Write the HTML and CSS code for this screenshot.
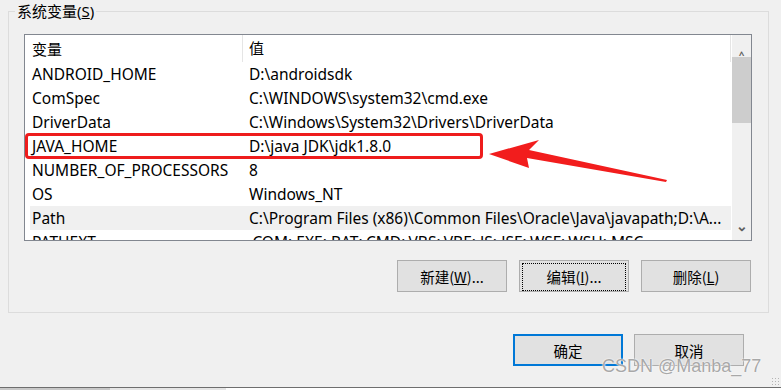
FILE: index.html
```html
<!DOCTYPE html>
<html lang="zh-CN">
<head>
    <meta charset="UTF-8">
    <title>系统变量</title>
    <link rel="stylesheet" href="styles.css">
</head>
<body>
    <div class="dialog">
        <fieldset class="group">
            <legend>系统变量(<u>S</u>)</legend>
            <div class="listbox">
                <div class="list">
                    <div class="head">
                        <div class="cell">变量</div>
                        <div class="cell sep">值</div>
                    </div>
                    <div class="row"><div class="cell">ANDROID_HOME</div><div class="cell">D:\androidsdk</div></div>
                    <div class="row"><div class="cell">ComSpec</div><div class="cell">C:\WINDOWS\system32\cmd.exe</div></div>
                    <div class="row"><div class="cell">DriverData</div><div class="cell">C:\Windows\System32\Drivers\DriverData</div></div>
                    <div class="row"><div class="cell">JAVA_HOME</div><div class="cell">D:\java JDK\jdk1.8.0</div></div>
                    <div class="row"><div class="cell">NUMBER_OF_PROCESSORS</div><div class="cell">8</div></div>
                    <div class="row"><div class="cell">OS</div><div class="cell">Windows_NT</div></div>
                    <div class="row hover"><div class="cell">Path</div><div class="cell">C:\Program Files (x86)\Common Files\Oracle\Java\javapath;D:\A...</div></div>
                    <div class="row"><div class="cell">PATHEXT</div><div class="cell">.COM;.EXE;.BAT;.CMD;.VBS;.VBE;.JS;.JSE;.WSF;.WSH;.MSC</div></div>
                </div>
                <div class="scrollbar">
                    <div class="arrow">&#x2038;</div>
                    <div class="thumb"></div>
                    <div class="track"></div>
                    <div class="arrow down">&#x2304;</div>
                </div>
                <div class="mark"></div>
            </div>
            <div class="actions">
                <button>新建(<u>W</u>)...</button>
                <button class="focused"><span>编辑(<u>I</u>)...</span></button>
                <button>删除(<u>L</u>)</button>
            </div>
        </fieldset>
        <div class="footer">
            <button class="default">确定</button>
            <button>取消</button>
        </div>
        <svg class="pointer" width="200" height="50" viewBox="0 0 200 50">
            <polygon points="6,18 56,4 46,14 184,44 183,46 44,22 46,32" fill="#f21d1d"/>
        </svg>
        <div class="watermark">CSDN @Manba_77</div>
        <div class="grip"></div>
    </div>
    <div class="under">
        <div class="under-bar"></div>
        <div class="under-gap"></div>
    </div>
</body>
</html>
```

FILE: styles.css
```css
body {
    margin: 0;
    background-color: #f0f0f0;
    font-family: "Noto Sans", "Noto Sans CJK SC", sans-serif;
    font-size: 15.5px;
    color: #000;
    width: 781px;
    height: 390px;
    overflow: hidden;
}

.dialog {
    position: relative;
    height: 387px;
    padding: 1px 12px 0 8px;
    box-sizing: border-box;
}

.group {
    margin: 0;
    padding: 13px 16px 20px 15px;
    border: 1px solid #dcdcdc;
    min-width: 0;
}

.group legend {
    margin-left: -9px;
    padding: 0 2px;
    line-height: 20px;
    height: 20px;
    font-size: 15px;
}

.listbox {
    position: relative;
    display: flex;
    height: 205px;
    border: 1px solid #828790;
    background-color: #fff;
    overflow: hidden;
}

.list {
    flex: 1;
    overflow: hidden;
}

.head,
.row {
    display: grid;
    white-space: nowrap;
}

.head {
    grid-template-columns: 217px 1fr;
    height: 27px;
    align-items: center;
    border-right: 1px solid #e5e5e5;
    font-size: 15px;
}

.head .cell {
    padding-left: 7px;
}

.head .sep {
    border-left: 1px solid #e5e5e5;
    padding-left: 6px;
    line-height: 27px;
}

.row {
    grid-template-columns: 212px 1fr;
    height: 24px;
    line-height: 24px;
    margin-left: 5px;
}

.row .cell {
    padding-left: 2px;
    overflow: hidden;
}

.row .cell + .cell {
    padding-left: 7px;
}

.row.hover {
    background-color: #f0f0f0;
}

.scrollbar {
    width: 19px;
    display: flex;
    flex-direction: column;
    background-color: #f0f0f0;
    border-left: 1px solid #fff;
}

.arrow {
    height: 22px;
    text-align: center;
    color: #606060;
    font-size: 14px;
    line-height: 26px;
    font-weight: bold;
}

.arrow.down {
    line-height: 16px;
}

.thumb {
    height: 66px;
    background-color: #cdcdcd;
}

.track {
    flex: 1;
}

.actions {
    display: flex;
    justify-content: flex-end;
    gap: 12px;
    margin-top: 19px;
    margin-right: 1px;
}

button {
    font-family: "Noto Sans CJK SC", sans-serif;
    font-size: 14.5px;
    width: 110px;
    height: 32px;
    background-color: #e1e1e1;
    border: 1px solid #adadad;
    border-radius: 0;
    padding: 0;
    color: #000;
}

.focused span {
    display: block;
    margin: 2px;
    height: 26px;
    line-height: 26px;
    border: 1px dotted #000;
}

.footer {
    display: flex;
    justify-content: flex-end;
    gap: 11px;
    margin-top: 21px;
    padding-right: 25px;
}

button.default {
    border: 2px solid #0078d7;
}

.mark {
    position: absolute;
    left: 0;
    top: 98px;
    width: 452px;
    height: 20px;
    border: 3px solid #ee1c1c;
    border-radius: 4px;
}

.pointer {
    position: absolute;
    left: 483px;
    top: 136px;
}

.watermark {
    position: absolute;
    left: 602px;
    top: 356px;
    font-family: "Liberation Sans", Arial, sans-serif;
    font-size: 18px;
    color: #a8a8a8;
    text-shadow: 0 0 2px #fff, 0 0 1px #fff;
}

.grip {
    position: absolute;
    right: 0;
    bottom: 0;
    width: 10px;
    height: 10px;
    background-image: radial-gradient(#b4b4b4 35%, transparent 40%);
    background-size: 3px 3px;
}

.under {
    height: 3px;
}

.under-bar {
    height: 1px;
    background-color: #6e6e6e;
}

.under-gap {
    height: 2px;
    background: linear-gradient(to right, #c8c8c8 0, #c8c8c8 110px, #e6e6e6 110px, #e6e6e6 226px, #ffffff 226px);
}
```
